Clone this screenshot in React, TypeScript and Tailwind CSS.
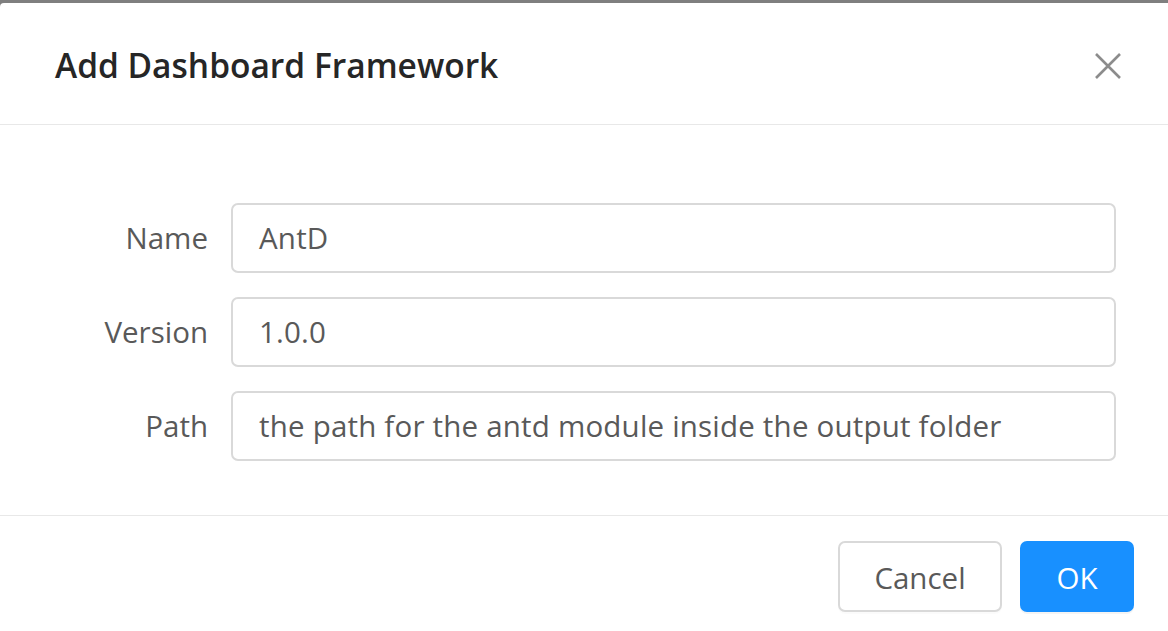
import React from 'react';

const fields = [
  { label: 'Name', value: 'AntD' },
  { label: 'Version', value: '1.0.0' },
  { label: 'Path', value: 'the path for the antd module inside the output folder' },
];

const App = () => {
  return (
    <div className="w-[1168px] h-[631px] overflow-hidden bg-[#7f7f7f] font-['Open_Sans',sans-serif]">
      <div className="mt-[3px] h-[628px] bg-white rounded-tl-[4px] flex flex-col">
        <div className="h-[122px] flex items-center justify-between pl-[55px] pr-[46px] border-b border-[#e8e8e8]">
          <h1 className="text-[33.5px] leading-[44px] font-semibold text-[#262626] pt-[3px]">Add Dashboard Framework</h1>
          <svg width="28" height="28" viewBox="0 0 28 28" className="text-[#8c8c8c] mt-[4px]">
            <path d="M2 2 L26 26 M26 2 L2 26" stroke="currentColor" strokeWidth="2.6" fill="none" />
          </svg>
        </div>

        <div className="pt-[78px] pb-[54px] pr-[52px] flex flex-col gap-[24px] border-b border-[#e8e8e8]">
          {fields.map((f) => (
            <div key={f.label} className="flex items-center">
              <label className="w-[208px] text-right text-[29.5px] text-[#595959]">{f.label}</label>
              <div className="ml-[23px] flex-1 h-[70px] flex items-center px-[26px] border-2 border-[#d9d9d9] rounded-[7px] text-[29.5px] tracking-[0.2px] text-[#595959]">
                {f.value}
              </div>
            </div>
          ))}
        </div>

        <div className="flex justify-end gap-[18px] pt-[25px] pr-[34px]">
          <button className="w-[164px] h-[71px] pt-[3px] border-2 border-[#d9d9d9] rounded-[7px] bg-white text-[29.5px] text-[#595959] shadow-[0_2px_0_rgba(0,0,0,0.015)]">
            Cancel
          </button>
          <button className="w-[114px] h-[71px] pt-[3px] rounded-[7px] bg-[#1890ff] text-[29.5px] text-white shadow-[0_2px_0_rgba(0,0,0,0.045)]">
            OK
          </button>
        </div>
      </div>
    </div>
  );
};

export default App;
